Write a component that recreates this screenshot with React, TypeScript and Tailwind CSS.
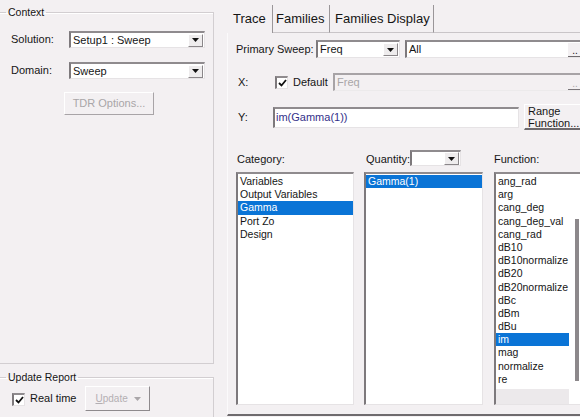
import React from 'react';

const sunken =
  'bg-white border-t-2 border-l-2 border-b border-r border-t-[#8f8b8e] border-l-[#7d797c] border-b-[#e6e3e5] border-r-[#e6e3e5]';

function Arrow({ color = '#111' }: { color?: string }) {
  return (
    <svg width="7" height="4" viewBox="0 0 7 4">
      <path d="M0 0h7L3.5 4z" fill={color} />
    </svg>
  );
}

function DropBtn() {
  return (
    <div className="w-[15px] h-[13px] mr-[1px] flex items-center justify-center bg-[#eeeced] border border-t-white border-l-white border-b-[#8a8689] border-r-[#8a8689]">
      <Arrow />
    </div>
  );
}

function Combo({ text, className }: { text: string; className: string }) {
  return (
    <div className={`${sunken} ${className} flex items-center justify-between`}>
      <span className="pl-[2px] leading-none">{text}</span>
      <DropBtn />
    </div>
  );
}

function Check() {
  return (
    <div className={`${sunken} w-[13px] h-[13px] flex items-center justify-center`}>
      <svg width="9" height="8" viewBox="0 0 9 8">
        <path d="M1 4l2.5 2.5L8 1" stroke="#111" strokeWidth="1.8" fill="none" />
      </svg>
    </div>
  );
}

function ListItem({ text, selected }: { text: string; selected?: boolean }) {
  return (
    <div
      className={`h-[13.2px] leading-[13.2px] pl-[2px] whitespace-nowrap ${
        selected ? 'bg-[#0a74d6] text-white' : ''
      }`}
    >
      {text}
    </div>
  );
}

const functions = [
  'ang_rad',
  'arg',
  'cang_deg',
  'cang_deg_val',
  'cang_rad',
  'dB10',
  'dB10normalize',
  'dB20',
  'dB20normalize',
  'dBc',
  'dBm',
  'dBu',
  'im',
  'mag',
  'normalize',
  're',
];

export default function App() {
  return (
    <div className="w-[580px] h-[417px] overflow-hidden bg-[#f3f0f2] flex text-[11px] text-[#151515] font-['Liberation_Sans',Arial,sans-serif]">
      {/* left column */}
      <div className="w-[214px] shrink-0 flex flex-col">
        <fieldset className="shrink-0 ml-[-2px] mt-[6px] w-[216px] h-[358px] border border-[#d2ced1] shadow-[inset_1px_1px_0_#ffffff]">
          <legend className="ml-[7px] px-[2px] text-[10.5px] leading-[12px]">Context</legend>
          <div className="flex items-center mt-[13px]">
            <span className="ml-[12px] w-[58px]">Solution:</span>
            <Combo text="Setup1 : Sweep" className="w-[136px] h-[17px]" />
          </div>
          <div className="flex items-center mt-[14px]">
            <span className="ml-[12px] w-[58px]">Domain:</span>
            <Combo text="Sweep" className="w-[136px] h-[17px]" />
          </div>
          <div className="mt-[13px] ml-[65px] w-[90px] h-[23px] flex items-center justify-center text-[#a9a6a8] border border-t-white border-l-white border-b-[#a8a4a7] border-r-[#a8a4a7] bg-[#f3f0f2]">
            TDR Options...
          </div>
        </fieldset>
        <fieldset className="shrink-0 ml-[-2px] mt-[7px] w-[216px] h-[60px] border border-[#d2ced1] shadow-[inset_1px_1px_0_#ffffff]">
          <legend className="ml-[7px] px-[2px] text-[10.5px] leading-[12px]">Update Report</legend>
          <div className="flex items-center mt-[3px]">
            <div className="ml-[13px] mt-[2px]">
              <Check />
            </div>
            <span className="ml-[5px]">Real time</span>
            <div className="ml-[9px] w-[65px] h-[25px] flex items-center justify-between pl-[9px] pr-[8px] text-[#b3afb2] text-[10px] border border-t-white border-l-white border-b-[#8e8a8d] border-r-[#8e8a8d]">
              <span>
                <span className="underline">U</span>pdate
              </span>
              <Arrow color="#aaa6a9" />
            </div>
          </div>
        </fieldset>
      </div>

      {/* right panel */}
      <div className="ml-[13px] w-[370px] shrink-0 flex flex-col">
        <div className="h-[33px] shrink-0 flex items-end text-[13px]">
          <div className="h-[28px] w-[46px] pl-[6px] flex items-center border-r border-[#9a9699]">Trace</div>
          <div className="h-[28px] w-[57px] pl-[3px] flex items-center border-r border-b border-r-[#9a9699] border-b-[#c9c5c8]">
            Families
          </div>
          <div className="h-[28px] w-[104px] pl-[5px] flex items-center border-r border-b border-r-[#9a9699] border-b-[#c9c5c8]">
            Families Display
          </div>
          <div className="flex-1 h-[28px] border-b border-[#c9c5c8]" />
        </div>

        <div className="h-[383px] shrink-0 border-l border-l-[#fbfafb] border-b-2 border-b-[#6e6a6d] flex flex-col pl-[8px]">
          {/* primary sweep */}
          <div className="flex items-center mt-[7px] h-[18px]">
            <span className="w-[80px]">Primary Sweep:</span>
            <Combo text="Freq" className="w-[84px] h-[18px]" />
            <div className={`${sunken} ml-[5px] w-[180px] h-[18px] flex items-center justify-between`}>
              <span className="pl-[2px]">All</span>
              <span className="mr-[2px] w-[14px] h-[14px] flex items-end justify-center text-[10px] leading-[10px] border-b border-[#6e6a6d] bg-[#f3f0f2]">
                ..
              </span>
            </div>
          </div>

          {/* X */}
          <div className="flex items-center mt-[15px] h-[18px]">
            <span className="ml-[2px] w-[37px]">X:</span>
            <Check />
            <span className="ml-[5px] w-[40px]">Default</span>
            <div className="w-[252px] h-[18px] flex items-center justify-between bg-[#f3f0f2] border-t-2 border-l-2 border-t-[#a7a3a6] border-l-[#a7a3a6] border-b border-r border-b-[#eceaeb] border-r-[#eceaeb]">
              <span className="pl-[2px] text-[#a9a6a8]">Freq</span>
              <span className="mr-[2px] w-[14px] h-[14px] flex items-end justify-center text-[10px] leading-[10px] text-[#a9a6a8] border-b border-[#7a767a]">
                ..
              </span>
            </div>
          </div>

          {/* Y */}
          <div className="flex items-center mt-[13px] h-[26px]">
            <span className="ml-[2px] w-[35px]">Y:</span>
            <div className={`${sunken} w-[246px] h-[21px] flex items-center`}>
              <span className="pl-[1px] text-[#33308a]">im(Gamma(1))</span>
            </div>
            <div className="ml-[5px] w-[62px] h-[26px] flex flex-col justify-center pl-[3px] leading-[12px] border-b-2 border-b-[#6e6a6d] border-t border-l border-t-white border-l-white">
              <span>Range</span>
              <span>Function...</span>
            </div>
          </div>

          {/* labels */}
          <div className="flex items-center mt-[20px] h-[16px]">
            <span className="ml-[1px] w-[129px] pt-[3px]">Category:</span>
            <span className="w-[44px] pt-[3px]">Quantity:</span>
            <Combo text="" className="w-[51px] h-[16px]" />
            <span className="ml-[33px] pt-[3px]">Function:</span>
          </div>

          {/* lists */}
          <div className="flex mt-[6px] h-[233px] text-[10.5px]">
            <div className={`${sunken} w-[118px] h-full pt-[1px]`}>
              <ListItem text="Variables" />
              <ListItem text="Output Variables" />
              <ListItem text="Gamma" selected />
              <ListItem text="Port Zo" />
              <ListItem text="Design" />
            </div>
            <div className={`${sunken} ml-[10px] w-[119px] h-full pt-[1px]`}>
              <ListItem text="Gamma(1)" selected />
            </div>
            <div className={`${sunken} ml-[11px] w-[96px] h-full flex`}>
              <div className="flex flex-col w-[73px]">
                <div className="pt-[1px] h-[215px]">
                  {functions.map((f) => (
                    <ListItem key={f} text={f} selected={f === 'im'} />
                  ))}
                </div>
                <div className="flex-1 bg-[#ece9eb]" />
              </div>
              <div className="flex-1 flex pl-[6px] pt-[45px]">
                <div className="w-[4px] h-[162px] bg-[#8c888b]" />
              </div>
            </div>
          </div>
        </div>
      </div>
    </div>
  );
}
